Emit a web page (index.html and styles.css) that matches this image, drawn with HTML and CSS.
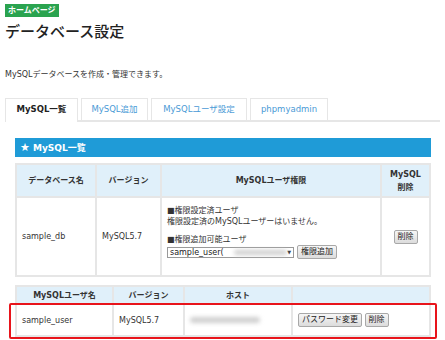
FILE: index.html
```html
<!DOCTYPE html>
<html lang="ja">
<head>
<meta charset="utf-8">
<link rel="stylesheet" href="styles.css">
</head>
<body>
<div class="page">
  <span class="badge">ホームページ</span>
  <h1 class="title">データベース設定</h1>
  <p class="desc">MySQLデータベースを作成・管理できます。</p>

  <div class="tabs">
    <div class="tab tab-active tab-w1">MySQL一覧</div>
    <div class="tab tab-w2">MySQL追加</div>
    <div class="tab tab-w3">MySQLユーザ設定</div>
    <div class="tab tab-w4">phpmyadmin</div>
  </div>

  <div class="panel">
    <div class="bar"><span class="star">★</span> MySQL一覧</div>

    <table class="grid grid-db">
      <colgroup>
        <col class="c80"><col class="c65"><col><col class="c49">
      </colgroup>
      <thead>
        <tr class="head-tall">
          <th>データベース名</th>
          <th>バージョン</th>
          <th>MySQLユーザ権限</th>
          <th>MySQL<br>削除</th>
        </tr>
      </thead>
      <tbody>
        <tr class="row-db">
          <td class="left">sample_db</td>
          <td class="left">MySQL5.7</td>
          <td class="perm">
            <div class="line">■権限設定済ユーザ</div>
            <div class="line">権限設定済のMySQLユーザーはいません。</div>
            <div class="line gap">■権限追加可能ユーザ</div>
            <div class="select-row">
              <div class="select"><span>sample_user(</span><span class="blur blur-sel"></span><span class="arrow">▼</span></div>
              <button class="btn">権限追加</button>
            </div>
          </td>
          <td class="center"><button class="btn">削除</button></td>
        </tr>
      </tbody>
    </table>

    <table class="grid grid-user">
      <colgroup>
        <col class="c97"><col class="c71"><col class="c108"><col>
      </colgroup>
      <tr class="head-short">
        <th>MySQLユーザ名</th>
        <th>バージョン</th>
        <th>ホスト</th>
        <th></th>
      </tr>
    </table>
    <div class="highlight">
      <table class="grid grid-row">
        <colgroup>
          <col class="c97"><col class="c71"><col class="c108"><col>
        </colgroup>
        <tr class="row-user">
          <td class="left">sample_user</td>
          <td class="left">MySQL5.7</td>
          <td class="left"><span class="blur blur-host"></span></td>
          <td class="left"><button class="btn">パスワード変更</button> <button class="btn">削除</button></td>
        </tr>
      </table>
    </div>
  </div>
</div>
</body>
</html>
```

FILE: styles.css
```css
html, body {
  margin: 0;
  padding: 0;
  background: #fff;
}
body {
  font-family: "DejaVu Sans", "Noto Sans CJK JP", sans-serif;
  color: #333;
  font-size: 8px;
}
.page {
  padding: 4px 5px 0 5px;
}
.badge {
  display: inline-block;
  background: #2aa34f;
  color: #fff;
  font-size: 8px;
  font-weight: bold;
  line-height: 13px;
  padding: 0 3px;
  vertical-align: top;
}
.title {
  font-family: "Noto Sans CJK JP", sans-serif;
  font-size: 15px;
  font-weight: 500;
  line-height: 20px;
  margin: 4px 0 0;
  color: #222;
}
.desc {
  margin: 28px 0 0;
  font-size: 8px;
  line-height: 12px;
  color: #333;
}
.tabs {
  display: flex;
  gap: 3px;
  margin-top: 17px;
  border-bottom: 2px solid #e6e6e6;
  height: 22px;
}
.tab {
  box-sizing: border-box;
  height: 22px;
  border: 1px solid #e6e6e6;
  border-bottom: none;
  text-align: center;
  line-height: 21px;
  font-size: 8.5px;
  color: #4a9ad6;
  background: #fff;
}
.tab-active {
  color: #222;
  font-weight: bold;
  height: 24px;
  margin-bottom: -2px;
}
.tab-w1 { width: 73px; }
.tab-w2 { width: 67px; }
.tab-w3 { width: 96px; }
.tab-w4 { width: 78px; }

.panel {
  padding: 16px 9px 0 10px;
}
.bar {
  background: #1f9bd7;
  color: #fff;
  font-weight: bold;
  font-size: 9px;
  height: 19px;
  line-height: 19px;
  padding-left: 5px;
}
.star {
  font-size: 11px;
}
.grid {
  width: 100%;
  border-collapse: separate;
  border-spacing: 0;
  table-layout: fixed;
  border-top: 2px solid #e6e6e6;
  border-left: 2px solid #e6e6e6;
}
.grid-db {
  margin-top: 6px;
}
.grid-user {
  margin-top: 8px;
}
.grid-row {
  border-top: none;
}
.grid th, .grid td {
  border-right: 2px solid #e6e6e6;
  border-bottom: 2px solid #e6e6e6;
  padding: 0 5px;
  font-size: 8px;
}
.grid th {
  background: #e0f0fa;
  font-weight: bold;
  color: #333;
  text-align: center;
  line-height: 13px;
}
.c80 { width: 80px; }
.c65 { width: 65px; }
.c49 { width: 49px; }
.c97 { width: 97px; }
.c71 { width: 71px; }
.c108 { width: 108px; }
.head-tall { height: 33px; }
.head-short { height: 18px; }
.row-db { height: 79px; }
.row-user { height: 32px; }
.left { text-align: left; vertical-align: middle; }
.center { text-align: center; vertical-align: middle; }
.perm {
  vertical-align: top;
  padding-top: 7px !important;
}
.line {
  line-height: 11px;
  white-space: nowrap;
}
.gap {
  margin-top: 7px;
}
.select-row {
  display: flex;
  align-items: center;
  gap: 3px;
  margin-top: 0;
}
.select {
  box-sizing: border-box;
  width: 127px;
  height: 11px;
  border: 1px solid #999;
  background: #fff;
  display: flex;
  align-items: center;
  padding: 0 2px;
  font-size: 8px;
  line-height: 9px;
  color: #222;
}
.arrow {
  margin-left: auto;
  font-size: 5px;
  color: #333;
}
.blur {
  display: inline-block;
  background: #cfcfcf;
  filter: blur(2px);
  border-radius: 3px;
}
.blur-sel {
  width: 55px;
  height: 5px;
  margin-left: 10px;
}
.blur-host {
  width: 70px;
  height: 6px;
  vertical-align: middle;
}
.btn {
  font-family: "DejaVu Sans", "Noto Sans CJK JP", sans-serif;
  font-size: 8px;
  color: #222;
  background: linear-gradient(#f6f6f6, #dcdcdc);
  border: 1px solid #a8a8a8;
  border-radius: 2px;
  padding: 0 3px;
  height: 14px;
  line-height: 12px;
  vertical-align: middle;
}
.highlight {
  margin: -2px -6px 0;
  border: 2px solid #e8141b;
  border-radius: 2px;
  padding: 0 4px 0;
}
```
